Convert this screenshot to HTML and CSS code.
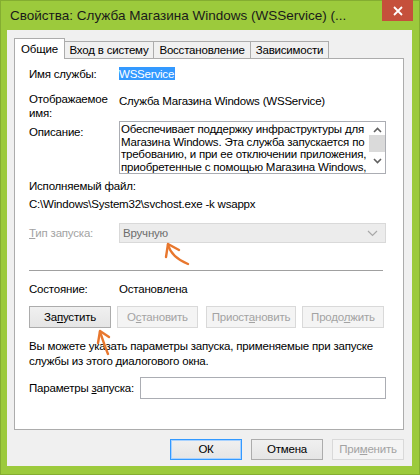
FILE: index.html
```html
<!DOCTYPE html>
<html lang="ru">
<head>
    <meta charset="UTF-8">
    <title>Свойства: Служба Магазина Windows (WSService)</title>
    <link rel="stylesheet" href="styles.css">
</head>
<body>
    <div class="window">
        <div class="titlebar">
            <span class="title">Свойства: Служба Магазина Windows (WSService) (...</span>
            <div class="close">
                <svg width="10" height="10" viewBox="0 0 10 10">
                    <path d="M1 1 L9 9 M9 1 L1 9" stroke="#fff" stroke-width="1.8"/>
                </svg>
            </div>
        </div>

        <div class="client">
            <div class="tabs">
                <div class="tab active tab-general">Общие</div>
                <div class="tab tab-logon">Вход в систему</div>
                <div class="tab tab-recovery">Восстановление</div>
                <div class="tab tab-deps">Зависимости</div>
            </div>

            <div class="panel">
                <div class="row row-name">
                    <div class="label">Имя службы:</div>
                    <div class="value"><span class="selected">WSService</span></div>
                </div>

                <div class="row row-display">
                    <div class="label">Отображаемое<br>имя:</div>
                    <div class="value">Служба Магазина Windows (WSService)</div>
                </div>

                <div class="row row-desc">
                    <div class="label">Описание:</div>
                    <div class="desc-box">
                        <div class="desc-text">
                            <div>Обеспечивает поддержку инфраструктуры для</div>
                            <div>Магазина Windows. Эта служба запускается по</div>
                            <div>требованию, и при ее отключении приложения,</div>
                            <div>приобретенные с помощью Магазина Windows,</div>
                        </div>
                        <div class="scrollbar">
                            <svg class="sb-arrow" width="9" height="6" viewBox="0 0 9 6">
                                <path d="M1 5 L4.5 1.5 L8 5" fill="none" stroke="#606060" stroke-width="1.6"/>
                            </svg>
                            <div class="sb-thumb"></div>
                            <svg class="sb-arrow" width="9" height="6" viewBox="0 0 9 6">
                                <path d="M1 1 L4.5 4.5 L8 1" fill="none" stroke="#606060" stroke-width="1.6"/>
                            </svg>
                        </div>
                    </div>
                </div>

                <div class="line line-exe">Исполняемый файл:</div>
                <div class="line line-path">C:\Windows\System32\svchost.exe -k wsappx</div>

                <div class="row row-startup">
                    <div class="label disabled"><u>Т</u>ип запуска:</div>
                    <div class="select">
                        <span>Вручную</span>
                        <svg width="11" height="7" viewBox="0 0 11 7">
                            <path d="M1 1 L5.5 5.5 L10 1" fill="none" stroke="#a8a8a8" stroke-width="1.2"/>
                        </svg>
                    </div>
                </div>

                <div class="separator"></div>

                <div class="row row-state">
                    <div class="label">Состояние:</div>
                    <div class="value">Остановлена</div>
                </div>

                <div class="actions">
                    <div class="btn btn-start">За<u>п</u>устить</div>
                    <div class="btn btn-stop disabled">О<u>с</u>тановить</div>
                    <div class="btn btn-pause disabled">Приост<u>а</u>новить</div>
                    <div class="btn btn-resume disabled">Продо<u>л</u>жить</div>
                </div>

                <div class="hint">
                    <div>Вы можете указать параметры запуска, применяемые при запуске</div>
                    <div>службы из этого диалогового окна.</div>
                </div>

                <div class="row row-params">
                    <div class="params-label">Параметры <u>з</u>апуска:</div>
                    <div class="input"></div>
                </div>
            </div>

            <div class="footer">
                <div class="btn btn-ok">ОК</div>
                <div class="btn">Отмена</div>
                <div class="btn disabled">При<u>м</u>енить</div>
            </div>
        </div>

        <!-- hand-drawn pointer arrows over the dialog -->
        <svg class="arrows" width="420" height="475" viewBox="0 0 420 475">
            <g fill="none" stroke="#e8772e" stroke-width="2.4" stroke-linecap="round" stroke-linejoin="round">
                <path d="M166 257 L168 244 L179 250"/>
                <path d="M168 245 C171 255 178 260 188 264"/>
                <path d="M98 343 L100 331 L109 337"/>
                <path d="M100 332 C103 340 105 347 108 354"/>
            </g>
        </svg>
    </div>
</body>
</html>
```

FILE: styles.css
```css
body {
    margin: 0;
    font-family: "Liberation Sans", Arial, sans-serif;
    font-size: 11.5px;
    letter-spacing: -0.2px;
    color: #000;
}
.window {
    position: relative;
    width: 420px;
    height: 475px;
    box-sizing: border-box;
    background-color: #9cca3c;
    border: 1px solid #84ad31;
}
.titlebar {
    display: flex;
    align-items: flex-start;
    height: 29px;
}
.title {
    font-size: 13.5px;
    letter-spacing: 0;
    line-height: 30px;
    padding-left: 9px;
    color: #1a1a1a;
    white-space: nowrap;
}
.close {
    margin-left: auto;
    margin-right: 6px;
    margin-top: -1px;
    width: 31px;
    height: 21px;
    flex-shrink: 0;
    background-color: #c5503b;
    display: flex;
    align-items: center;
    justify-content: center;
}
.client {
    margin-left: 6px;
    width: 405px;
    height: 436px;
    background-color: #f0f0f0;
    padding-top: 8px;
    box-sizing: border-box;
}
.tabs {
    display: flex;
    align-items: flex-end;
    margin-left: 7px;
    margin-bottom: -1px;
}
.tab {
    position: relative;
    height: 16px;
    line-height: 17px;
    box-sizing: content-box;
    border: 1px solid #acacac;
    background-color: #f0f0f0;
    text-align: center;
    margin-left: -1px;
}
.tab.active {
    z-index: 1;
    height: 20px;
    line-height: 20px;
    border-bottom: none;
    background-color: #fff;
    margin-left: 0;
}
.tab-general { width: 49px; }
.tab-logon { width: 88px; }
.tab-recovery { width: 96px; }
.tab-deps { width: 77px; }
.panel {
    margin-left: 7px;
    width: 390px;
    height: 372px;
    box-sizing: border-box;
    border: 1px solid #acacac;
    background-color: #fff;
    padding: 0 17px 0 14px;
}
.row {
    display: flex;
}
.label {
    width: 90px;
    flex-shrink: 0;
}
.row-name {
    margin-top: 8px;
    line-height: 15px;
}
.selected {
    background-color: #3399ff;
    color: #fff;
    padding: 1px 1px 0 0;
}
.row-display {
    margin-top: 10px;
    line-height: 14px;
}
.row-display .value {
    padding-top: 2px;
}
.row-desc {
    margin-top: 1px;
}
.row-desc .label {
    padding-top: 4px;
    line-height: 14px;
}
.desc-box {
    display: flex;
    width: 267px;
    height: 53px;
    box-sizing: border-box;
    border: 1px solid #abadb3;
    overflow: hidden;
}
.desc-text {
    flex: 1;
    padding: 1px 0 0 1px;
    line-height: 12.6px;
    white-space: nowrap;
    overflow: hidden;
}
.scrollbar {
    width: 16px;
    display: flex;
    flex-direction: column;
    align-items: center;
    background-color: #fff;
}
.sb-arrow {
    margin-top: 5px;
}
.sb-thumb {
    width: 16px;
    height: 17px;
    margin-top: 2px;
    margin-bottom: 1px;
    background-color: #dadada;
}
.line {
    line-height: 15px;
    white-space: nowrap;
}
.line-exe {
    margin-top: 5px;
}
.line-path {
    margin-top: 3px;
}
.row-startup {
    margin-top: 11px;
    line-height: 20px;
}
.disabled {
    color: #a3a3a3;
}
.select {
    display: flex;
    align-items: center;
    justify-content: space-between;
    width: 267px;
    height: 20px;
    box-sizing: border-box;
    border: 1px solid #d9d9d9;
    background-color: #ececec;
    color: #6d6d6d;
    padding: 0 7px 0 3px;
}
.separator {
    margin-top: 27px;
    margin-right: 3px;
    height: 1px;
    background-color: #a0a0a0;
}
.row-state {
    margin-top: 11px;
    line-height: 15px;
}
.actions {
    display: flex;
    gap: 6px;
    margin-top: 9px;
}
.btn {
    height: 22px;
    line-height: 20px;
    box-sizing: border-box;
    border: 1px solid #acacac;
    background: linear-gradient(#f0f0f0, #e5e5e5);
    text-align: center;
    white-space: nowrap;
}
.btn.disabled {
    border-color: #d9d9d9;
    background: #f4f4f4;
    color: #a3a3a3;
}
.btn-start { width: 82px; }
.btn-stop { width: 81px; }
.btn-pause { width: 90px; margin-left: 2px; }
.btn-resume { width: 82px; }
.hint {
    margin-top: 11px;
    line-height: 15px;
    white-space: nowrap;
}
.row-params {
    margin-top: 8px;
    align-items: center;
}
.params-label {
    width: 111px;
    flex-shrink: 0;
    white-space: nowrap;
}
.input {
    width: 246px;
    height: 22px;
    box-sizing: border-box;
    border: 1px solid #abadb3;
    background-color: #fff;
}
.footer {
    display: flex;
    justify-content: flex-end;
    gap: 9px;
    margin-top: 9px;
    margin-right: 8px;
}
.footer .btn {
    width: 72px;
    height: 21px;
    line-height: 19px;
}
.btn-ok {
    border-color: #3399ff;
    box-shadow: inset 0 0 0 1px #a8d2ff;
}
.arrows {
    position: absolute;
    left: -1px;
    top: -1px;
    pointer-events: none;
}
```
